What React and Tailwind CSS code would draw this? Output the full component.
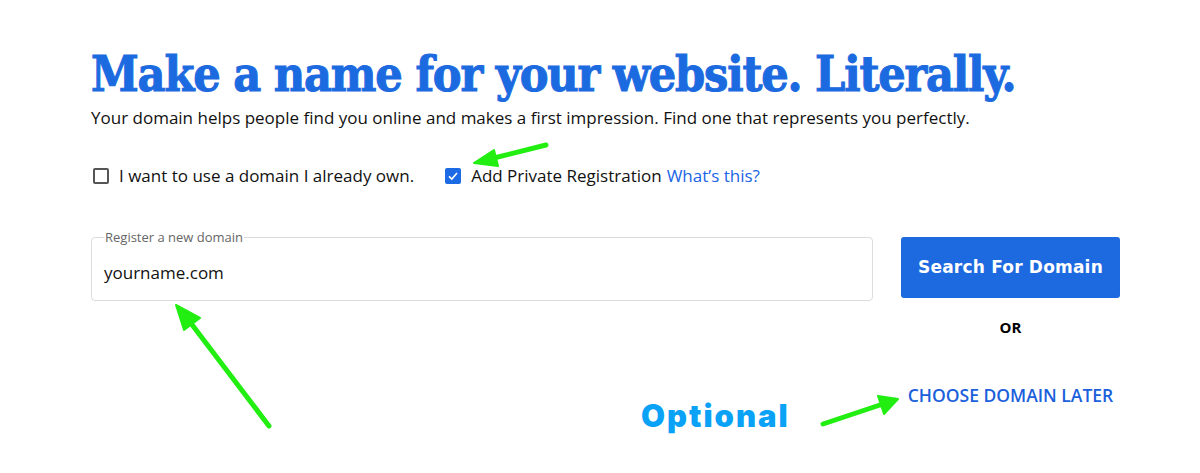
import React from "react"

function Arrows() {
    // green annotation arrows drawn over the page
    return (
        <svg className="pointer-events-none absolute inset-0" width="1200" height="473" viewBox="0 0 1200 473">
            <g stroke="#22ee11" strokeWidth="5" strokeLinecap="round" fill="#22ee11">
                <line x1="546" y1="145" x2="490" y2="159" />
                <polygon points="474,163 494,150 498,166" strokeWidth="2" strokeLinejoin="round" />
                <line x1="269" y1="426" x2="190" y2="322" />
                <polygon points="176,305 200,318 184,330" strokeWidth="2" strokeLinejoin="round" />
                <line x1="823" y1="424" x2="880" y2="405" />
                <polygon points="898,399 878,396 884,414" strokeWidth="2" strokeLinejoin="round" />
            </g>
        </svg>
    )
}

export default function App() {
    return (
        <div className="relative h-[473px] w-[1200px] overflow-hidden bg-white font-['Open_Sans',sans-serif] text-[#111]">
            <div className="pl-[91px] pt-[42px]">
                <h1 className="font-['DejaVu_Serif_Condensed','DejaVu_Serif',serif] text-[48px] font-bold leading-[64px] tracking-[-1.2px] text-[#1c6ae0] [-webkit-text-stroke:1px_#1c6ae0]">
                    Make a name for your website. Literally.
                </h1>
                <p className="text-[17px] leading-[24px] text-[#111]">
                    Your domain helps people find you online and makes a first impression. Find one that represents you perfectly.
                </p>
                <div className="mt-[34px] flex items-center text-[17px] leading-[24px]">
                    <label className="flex items-center">
                        <span className="ml-[2px] mr-[10px] h-[16px] w-[16px] rounded-[2px] border-2 border-[#555]" />
                        I want to use a domain I already own.
                    </label>
                    <label className="ml-[31px] flex items-center">
                        <span className="mr-[10px] flex h-[16px] w-[16px] items-center justify-center rounded-[2px] bg-[#1d6ae5]">
                            <svg width="12" height="12" viewBox="0 0 12 12">
                                <path d="M2 6.3 L4.8 9 L10 3" stroke="white" strokeWidth="1.6" fill="none" />
                            </svg>
                        </span>
                        Add Private Registration
                        <a className="ml-[5px] text-[#1a64e6]">What’s this?</a>
                    </label>
                </div>
                <div className="mt-[42px] flex items-start">
                    <fieldset className="h-[71px] w-[782px] rounded-[4px] border border-[#dcdcdc] px-[12px]">
                        <legend className="px-[1px] text-[13px] leading-[14px] text-[#666]">Register a new domain</legend>
                        <div className="mt-[17px] text-[17px] leading-[24px] text-[#111]">yourname.com</div>
                    </fieldset>
                    <div className="ml-[28px] flex w-[219px] flex-col items-center">
                        <button className="mt-[7px] h-[61px] w-[219px] rounded-[3px] bg-[#1d6ae0] font-['DejaVu_Sans',sans-serif] text-[17px] font-bold tracking-[0.2px] text-white">
                            Search For Domain
                        </button>
                        <div className="mt-[19px] text-[15px] font-bold leading-[20px] text-black">OR</div>
                        <a className="mt-[48px] text-[17.5px] font-semibold leading-[20px] text-[#1a5fdb]">CHOOSE DOMAIN LATER</a>
                    </div>
                </div>
            </div>
            <div className="absolute left-[641px] top-[396px] font-['Inter',sans-serif] text-[31px] font-black leading-[40px] tracking-[2px] text-[#0aa2f6]">
                Optional
            </div>
            <Arrows />
        </div>
    )
}
